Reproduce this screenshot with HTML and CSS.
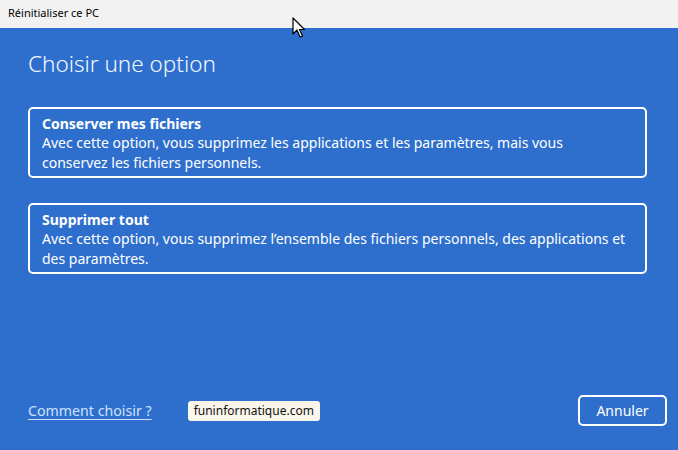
FILE: index.html
```html
<!DOCTYPE html>
<html lang="fr">
<head>
<meta charset="utf-8">
<title>Réinitialiser ce PC</title>
<link rel="stylesheet" href="styles.css">
</head>
<body>
<div class="window">
  <div class="titlebar">Réinitialiser ce PC</div>
  <div class="content">
    <h1 class="heading">Choisir une option</h1>
    <div class="options">
      <div class="option">
        <div class="option-title">Conserver mes fichiers</div>
        <div class="option-desc">Avec cette option, vous supprimez les applications et les paramètres, mais vous conservez les fichiers personnels.</div>
      </div>
      <div class="option">
        <div class="option-title">Supprimer tout</div>
        <div class="option-desc">Avec cette option, vous supprimez l’ensemble des fichiers personnels, des applications et des paramètres.</div>
      </div>
    </div>
    <div class="footer">
      <a class="link" href="#">Comment choisir ?</a>
      <span class="watermark">funinformatique.com</span>
      <button class="cancel">Annuler</button>
    </div>
  </div>
  <svg class="cursor" width="14" height="22" viewBox="0 0 14 22"><path d="M1 1 L1 17 L5 13 L8 20 L10.5 19 L7.5 12.5 L12.5 12.5 Z" fill="#fff" stroke="#000" stroke-width="1.2" stroke-linejoin="round"/></svg>
</div>
</body>
</html>
```
FILE: styles.css
```css
* { box-sizing: border-box; }
html, body { margin: 0; padding: 0; }
body { width: 678px; height: 450px; overflow: hidden; font-family: "Noto Sans", "Segoe UI", sans-serif; }
.window { position: relative; width: 678px; height: 450px; display: flex; flex-direction: column; background: #2e6fcd; }
.titlebar { height: 28px; background: #f2f2f2; color: #000; font-size: 11px; line-height: 26px; padding-left: 8px; flex: none; }
.content { flex: 1; display: flex; flex-direction: column; padding: 0 11px 24px 28px; color: #fff; }
.heading { margin: 21px 0 0 0; font-weight: 300; font-size: 22.5px; line-height: 30px; color: #f4f8ff; }
.options { display: flex; flex-direction: column; gap: 25px; margin-top: 28px; margin-right: 20px; }
.option { border: 2px solid #fff; border-radius: 5px; padding: 5px 17px 3px 12px; }
.option-title { font-weight: 700; font-size: 14px; line-height: 19px; }
.option-desc { font-size: 14px; line-height: 20px; }
.footer { margin-top: auto; display: flex; align-items: center; }
.link { color: #cfe1ff; font-size: 14.2px; text-decoration: underline; text-underline-offset: 3px; }
.watermark { margin-left: 36px; background: #faf6ec; color: #111; font-size: 12px; border-radius: 3px; padding: 0 6px; height: 20px; line-height: 20px; }
.cancel { margin-left: auto; width: 89px; height: 31px; border: 2px solid #fff; border-radius: 5px; background: transparent; color: #fff; font-family: inherit; font-size: 14px; }
.cursor { position: absolute; left: 292px; top: 17px; }
```
